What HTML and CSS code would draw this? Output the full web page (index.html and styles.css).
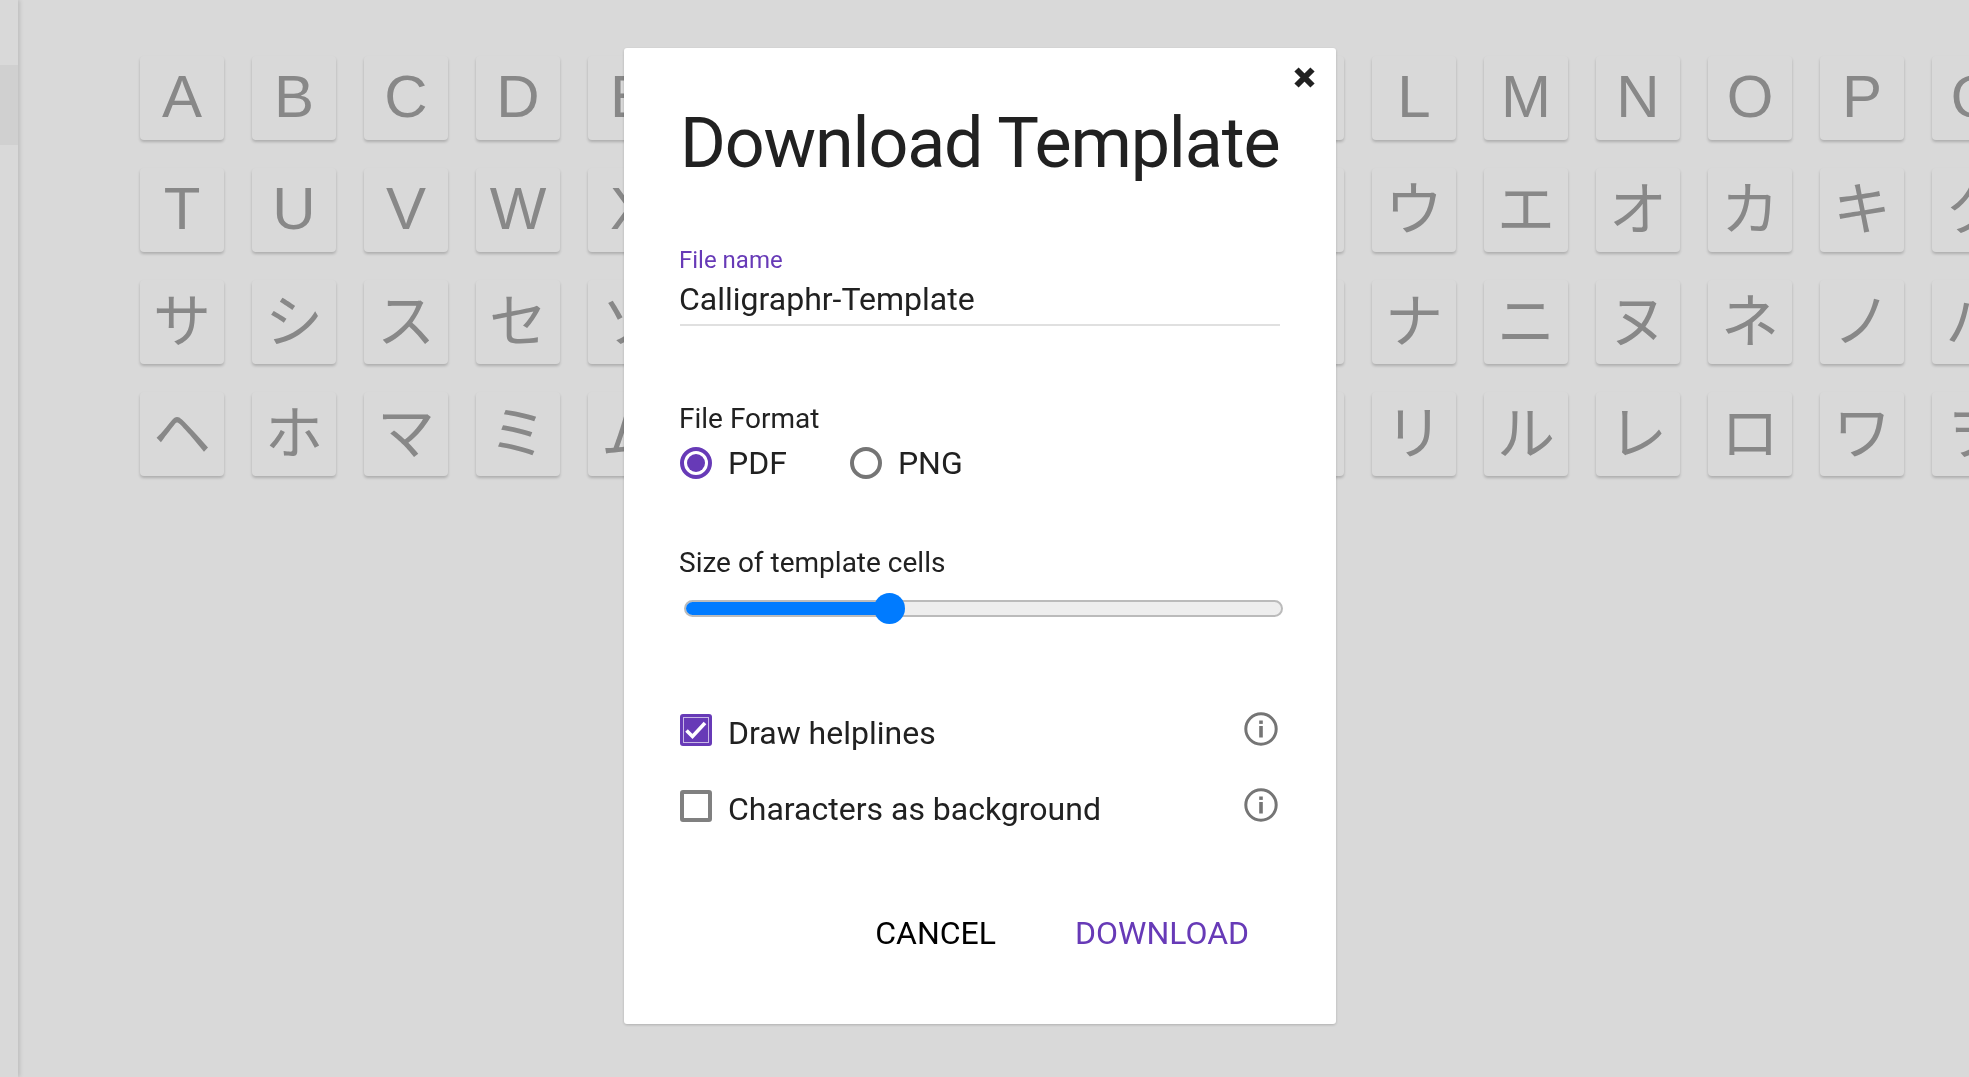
FILE: index.html
```html
<!DOCTYPE html>
<html lang="en">
<head>
    <meta charset="UTF-8">
    <title>Download Template</title>
    <link rel="stylesheet" href="styles.css">
</head>
<body>
    <div class="page">
        <aside class="sidebar">
            <div class="sidebar-item"></div>
        </aside>

        <main class="char-grid">
            <div class="char">A</div><div class="char">B</div><div class="char">C</div><div class="char">D</div><div class="char">E</div><div class="char">F</div><div class="char">G</div><div class="char">H</div><div class="char">I</div><div class="char">J</div><div class="char">K</div><div class="char">L</div><div class="char">M</div><div class="char">N</div><div class="char">O</div><div class="char">P</div><div class="char">Q</div><div class="char">R</div><div class="char">S</div>
            <div class="char">T</div><div class="char">U</div><div class="char">V</div><div class="char">W</div><div class="char">X</div><div class="char">Y</div><div class="char">Z</div>
            <div class="char kana">ー</div><div class="char kana">・</div><div class="char kana">ア</div><div class="char kana">イ</div><div class="char kana">ウ</div><div class="char kana">エ</div><div class="char kana">オ</div><div class="char kana">カ</div><div class="char kana">キ</div><div class="char kana">ク</div><div class="char kana">ケ</div><div class="char kana">コ</div>
            <div class="char kana">サ</div><div class="char kana">シ</div><div class="char kana">ス</div><div class="char kana">セ</div><div class="char kana">ソ</div><div class="char kana">タ</div><div class="char kana">チ</div><div class="char kana">ッ</div><div class="char kana">ツ</div><div class="char kana">テ</div><div class="char kana">ト</div><div class="char kana">ナ</div><div class="char kana">ニ</div><div class="char kana">ヌ</div><div class="char kana">ネ</div><div class="char kana">ノ</div><div class="char kana">ハ</div><div class="char kana">ヒ</div><div class="char kana">フ</div>
            <div class="char kana">ヘ</div><div class="char kana">ホ</div><div class="char kana">マ</div><div class="char kana">ミ</div><div class="char kana">ム</div><div class="char kana">メ</div><div class="char kana">モ</div><div class="char kana">ヤ</div><div class="char kana">ユ</div><div class="char kana">ヨ</div><div class="char kana">ラ</div><div class="char kana">リ</div><div class="char kana">ル</div><div class="char kana">レ</div><div class="char kana">ロ</div><div class="char kana">ワ</div><div class="char kana">ヲ</div><div class="char kana">ン</div>
        </main>
    </div>

    <div class="overlay">
        <div class="modal">
            <button class="close-btn" aria-label="Close">
                <svg width="21" height="21" viewBox="0 0 21 21"><path d="M2.5 2.5l16 16M18.5 2.5l-16 16" fill="none" stroke="#212121" stroke-width="6"/></svg>
            </button>

            <h1 class="modal-title">Download Template</h1>

            <label class="field-label">File name</label>
            <div class="field-value">Calligraphr-Template</div>

            <p class="group-label format-label">File Format</p>
            <div class="radio-row">
                <span class="radio checked"></span>
                <span class="option-text pdf-text">PDF</span>
                <span class="radio"></span>
                <span class="option-text">PNG</span>
            </div>

            <p class="group-label size-label">Size of template cells</p>
            <div class="slider">
                <div class="slider-track"><div class="slider-fill"></div></div>
                <div class="slider-thumb"></div>
            </div>

            <div class="check-row first">
                <span class="checkbox checked">
                    <svg width="32" height="32" viewBox="0 0 32 32"><rect x="3.5" y="3.5" width="25" height="25" fill="none" stroke="#c9b8e6" stroke-width="1"/><path d="M6.5 16.5l6 6L25 9" fill="none" stroke="#fff" stroke-width="3.6"/></svg>
                </span>
                <span class="option-text">Draw helplines</span>
                <svg class="info-icon" width="34" height="34" viewBox="0 0 34 34"><circle cx="17" cy="17" r="15.2" fill="none" stroke="#757575" stroke-width="3"/><rect x="15.2" y="8.5" width="3.6" height="3.4" fill="#757575"/><rect x="15.2" y="14" width="3.6" height="11.5" fill="#757575"/></svg>
            </div>
            <div class="check-row">
                <span class="checkbox"></span>
                <span class="option-text">Characters as background</span>
                <svg class="info-icon" width="34" height="34" viewBox="0 0 34 34"><circle cx="17" cy="17" r="15.2" fill="none" stroke="#757575" stroke-width="3"/><rect x="15.2" y="8.5" width="3.6" height="3.4" fill="#757575"/><rect x="15.2" y="14" width="3.6" height="11.5" fill="#757575"/></svg>
            </div>

            <div class="modal-actions">
                <button class="action-btn">CANCEL</button>
                <button class="action-btn primary">DOWNLOAD</button>
            </div>
        </div>
    </div>
</body>
</html>
```

FILE: styles.css
```css
* {
    box-sizing: border-box;
}

html,
body {
    margin: 0;
    height: 100%;
    overflow: hidden;
}

body {
    background: #fff;
    font-family: Roboto, "Liberation Sans", sans-serif;
    color: #212121;
}

.page {
    display: flex;
    height: 100%;
}

.sidebar {
    flex: 0 0 18px;
    padding-top: 65px;
    background: #fff;
    box-shadow: 2px 0 4px rgba(0, 0, 0, 0.12);
}

.sidebar-item {
    height: 80px;
    background: #f5f5f5;
}

.char-grid {
    display: grid;
    grid-template-columns: repeat(19, 84px);
    grid-auto-rows: 84px;
    gap: 28px;
    padding: 56px 0 0 122px;
}

.char {
    background: #fff;
    border-radius: 4px;
    box-shadow: 0 2px 3px rgba(0, 0, 0, 0.2);
    font-family: "Liberation Sans", "Noto Sans CJK JP", sans-serif;
    font-size: 60px;
    line-height: 82px;
    text-align: center;
    color: #a0a0a0;
}

.char.kana {
    font-size: 58px;
    line-height: 83px;
}

.overlay {
    position: fixed;
    inset: 0;
    display: flex;
    justify-content: center;
    align-items: flex-start;
    padding: 48px 9px 0 0;
    background: rgba(0, 0, 0, 0.15);
}

.modal {
    position: relative;
    width: 712px;
    height: 976px;
    padding: 54px 56px 0;
    background: #fff;
    border-radius: 3px;
    box-shadow: 0 1px 3px rgba(0, 0, 0, 0.2);
}

.close-btn {
    position: absolute;
    top: 19px;
    right: 21px;
    display: block;
    padding: 0;
    border: 0;
    background: none;
    line-height: 0;
}

.modal-title {
    margin: 0;
    font-size: 70px;
    font-weight: 400;
    line-height: 82px;
    letter-spacing: -1.15px;
    white-space: nowrap;
}

.field-label {
    display: block;
    margin: 62px 0 0 -1px;
    font-size: 24px;
    line-height: 28px;
    color: #673ab7;
}

.field-value {
    margin-top: 6px;
    padding-bottom: 6px;
    border-bottom: 2px solid #e0e0e0;
    font-size: 32px;
    line-height: 38px;
    text-indent: -1px;
}

.group-label {
    margin: 0 0 0 -1px;
    font-size: 28px;
    line-height: 32px;
}

.format-label {
    margin-top: 77px;
}

.size-label {
    margin-top: 68px;
}

.radio-row {
    display: flex;
    align-items: center;
    height: 32px;
    margin-top: 12px;
}

.radio {
    position: relative;
    flex: 0 0 32px;
    height: 32px;
    border: 4px solid #757575;
    border-radius: 50%;
}

.radio.checked {
    border-color: #673ab7;
}

.radio.checked::after {
    content: "";
    position: absolute;
    inset: 3px;
    background: #673ab7;
    border-radius: 50%;
}

.option-text {
    margin-left: 16px;
    font-size: 32px;
    line-height: 38px;
    white-space: nowrap;
}

.pdf-text {
    margin-right: 63px;
}

.slider {
    position: relative;
    height: 31px;
    margin: 14px 0 0 4px;
    width: 599px;
}

.slider-track {
    position: absolute;
    top: 7px;
    left: 0;
    right: 0;
    height: 17px;
    overflow: hidden;
    background: #eee;
    border: 2px solid #bbb;
    border-radius: 9px;
}

.slider-fill {
    width: 34%;
    height: 100%;
    background: #007bff;
}

.slider-thumb {
    position: absolute;
    top: 0;
    left: 190px;
    width: 31px;
    height: 31px;
    background: #007bff;
    border-radius: 50%;
}

.check-row {
    display: flex;
    align-items: flex-start;
    margin-top: 36px;
}

.check-row.first {
    margin-top: 88px;
}

.check-row .option-text {
    margin-top: 2px;
}

.checkbox {
    flex: 0 0 32px;
    height: 32px;
    margin-top: 2px;
    border: 4px solid #808080;
    border-radius: 3px;
}

.checkbox.checked {
    border: 0;
    background: #673ab7;
}

.checkbox svg {
    display: block;
}

.info-icon {
    margin: 0 2px 0 auto;
}

.modal-actions {
    display: flex;
    justify-content: flex-end;
    gap: 79px;
    margin-top: 86px;
    padding-right: 31px;
}

.action-btn {
    padding: 0;
    border: 0;
    background: none;
    font-family: inherit;
    font-size: 32px;
    line-height: 38px;
    color: #000;
}

.action-btn.primary {
    color: #673ab7;
}
```
